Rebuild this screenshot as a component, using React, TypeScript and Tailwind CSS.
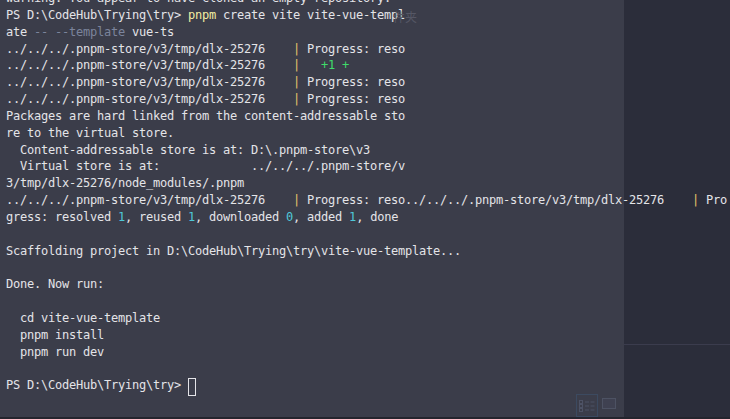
import React from "react";

const W = "text-[#e4e4e8]";
const Y = "text-[#f2eda2]";
const G = "text-[#7c849c]";
const P = "text-[#e8c46a]";
const N = "text-[#4fc8d8]";
const GR = "text-[#3fdc6a]";

const store = "../../../.pnpm-store/v3/tmp/dlx-25276    ";

type Seg = [string, string?];

const lines: Seg[][] = [
	[["warning: You appear to have cloned an empty repository."]],
	[["PS D:\\CodeHub\\Trying\\try> "], ["pnpm", Y], [" create vite vite-vue-templ"]],
	[["ate"], [" -- --template", G], [" vue-ts"]],
	[[store], ["|", P], [" Progress: reso"]],
	[[store], ["|", P], ["   "], ["+1 +", GR]],
	[[store], ["|", P], [" Progress: reso"]],
	[[store], ["|", P], [" Progress: reso"]],
	[["Packages are hard linked from the content-addressable sto"]],
	[["re to the virtual store."]],
	[["  Content-addressable store is at: D:\\.pnpm-store\\v3"]],
	[["  Virtual store is at:             ../../../.pnpm-store/v"]],
	[["3/tmp/dlx-25276/node_modules/.pnpm"]],
	[[store], ["|", P], [" Progress: reso" + store], ["|", P], [" Pro"]],
	[["gress: resolved "], ["1", N], [", reused "], ["1", N], [", downloaded "], ["0", N], [", added "], ["1", N], [", done"]],
	[[""]],
	[["Scaffolding project in D:\\CodeHub\\Trying\\try\\vite-vue-template..."]],
	[[""]],
	[["Done. Now run:"]],
	[[""]],
	[["  cd vite-vue-template"]],
	[["  pnpm install"]],
	[["  pnpm run dev"]],
	[[""]],
];

export default function App() {
	return (
		<div className="w-[730px] h-[419px] flex flex-col bg-[#24252e] overflow-hidden">
			<div className="flex h-[417px]">
				<div className="relative z-10 w-[624px] bg-[#3b3d4a]">
					<div
						className="pl-[6px] -mt-[10px] text-[12px] tracking-[-0.224px] leading-[16.85px] whitespace-pre"
						style={{ fontFamily: '"DejaVu Sans Mono", "Liberation Mono", monospace' }}
					>
						{lines.map((segs, i) => (
							<div key={i} className="h-[16.85px]">
								{segs.map(([t, c], j) => (
									<span key={j} className={c ?? W}>
										{t}
									</span>
								))}
							</div>
						))}
						<div className="h-[16.85px] flex items-center">
							<span className={W}>{"PS D:\\CodeHub\\Trying\\try> "}</span>
							<span className="inline-block w-[8px] h-[18px] mt-[3px] border border-[#e4e4e8]" />
						</div>
					</div>
					<span
						className="absolute left-[393px] top-[8px] text-[12px] text-[#555765]"
						style={{ fontFamily: '"Noto Sans CJK SC", sans-serif' }}
					>
						件夹
					</span>
					<div className="absolute left-[576px] top-[394px] flex items-start gap-[4px] opacity-60">
						<div className="w-[22px] h-[23px] border border-[#3d5470] flex items-center justify-center">
							<svg width="18" height="14" viewBox="0 0 18 14" fill="none" stroke="#596178" strokeWidth="1">
								<rect x="1.5" y="1.5" width="3" height="3" />
								<rect x="1.5" y="5.5" width="3" height="3" />
								<rect x="1.5" y="9.5" width="3" height="3" />
								<path d="M7 3h4M12.5 3h4M7 7h4M12.5 7h4M7 11h4M12.5 11h4" />
							</svg>
						</div>
						<div className="mt-[4px] w-[14px] h-[11px] border border-[#5a6074] bg-[#424556]" />
					</div>
				</div>
				<div className="flex-1 bg-[#2b2d3a] flex flex-col">
					<div className="h-[345px] border-b border-[#3b3c4d]" />
				</div>
			</div>
		</div>
	);
}
